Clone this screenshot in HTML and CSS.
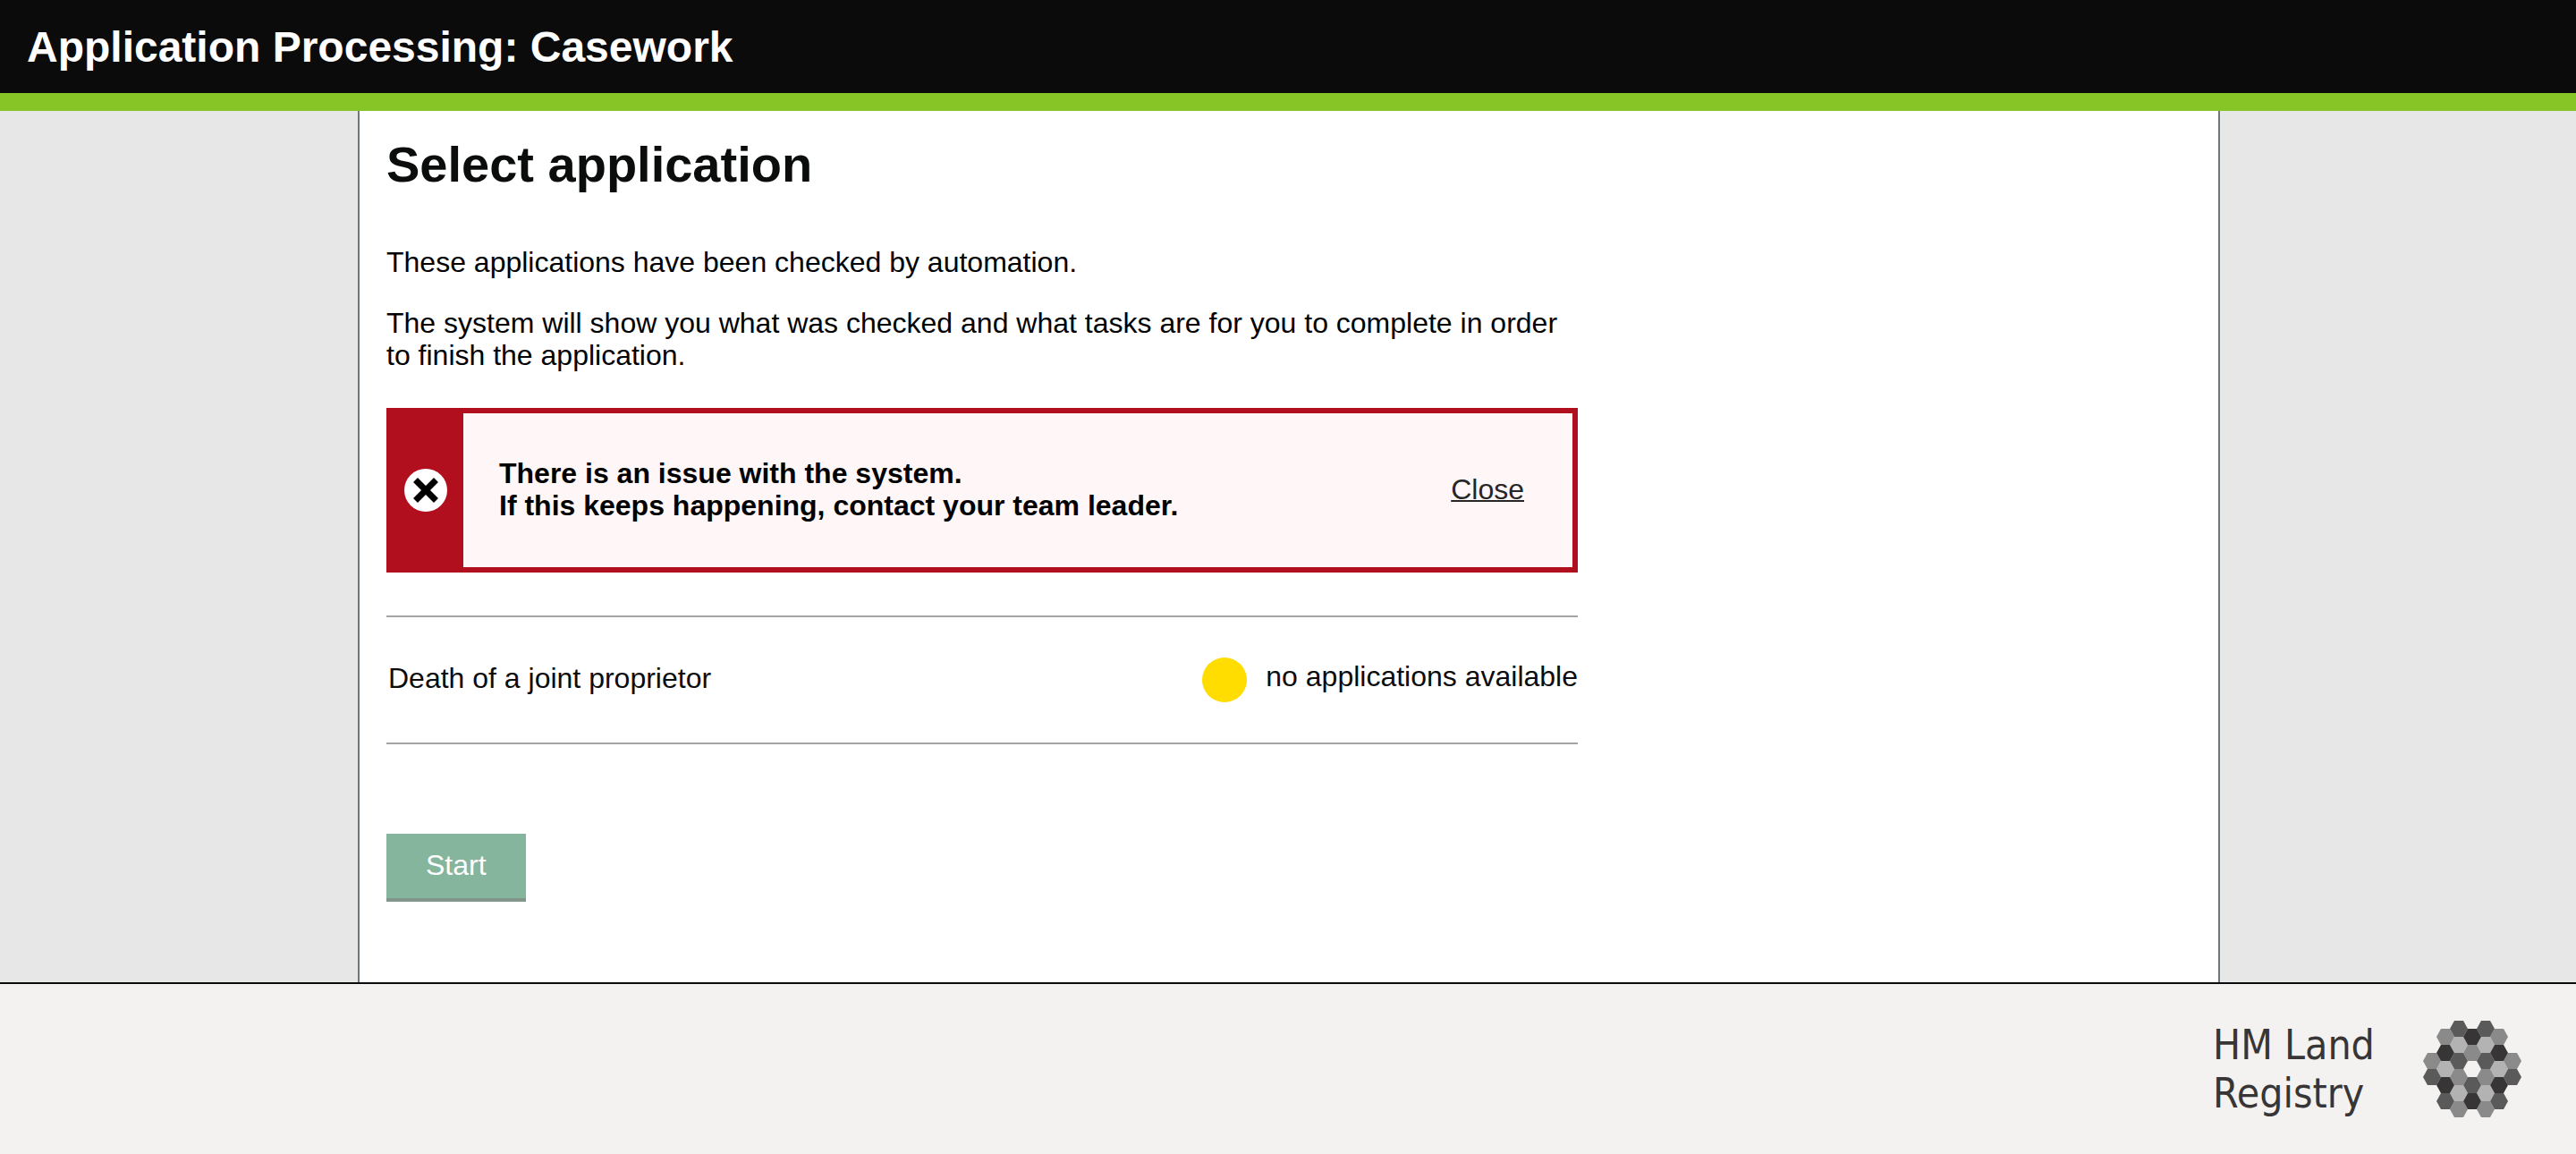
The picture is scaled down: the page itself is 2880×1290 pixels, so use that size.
FILE: index.html
```html
<!DOCTYPE html>
<html lang="en">
<head>
<meta charset="utf-8">
<title>Select application</title>
<link rel="stylesheet" href="styles.css">
</head>
<body>
<header class="header">Application Processing: Casework</header>
<div class="page">
  <main class="panel">
    <div class="column">
      <h1 class="title">Select application</h1>
      <p class="text">These applications have been checked by automation.</p>
      <p class="text">The system will show you what was checked and what tasks are for you to complete in order to finish the application.</p>
      <div class="alert" role="alert">
        <div class="alert-mark">
          <svg class="alert-icon" viewBox="0 0 48 48" aria-hidden="true">
            <circle cx="24" cy="24" r="24" fill="#fff"/>
            <path d="M12.500 12.500 35.500 35.500M35.500 12.500 12.500 35.500" stroke="#000" stroke-width="7"/>
          </svg>
        </div>
        <p class="alert-text">There is an issue with the system.<br>If this keeps happening, contact your team leader.</p>
        <a class="alert-close" href="#">Close</a>
      </div>
      <ul class="queue">
        <li class="queue-row">
          <span class="queue-name">Death of a joint proprietor</span>
          <span class="queue-dot"></span>
          <span class="queue-status">no applications available</span>
        </li>
      </ul>
      <button class="start" type="button" disabled>Start</button>
    </div>
  </main>
</div>
<footer class="footer">
  <div class="brand">HM Land<br>Registry</div>
  <svg class="emblem" viewBox="55 61 330 327" aria-hidden="true">
    <defs><path id="hex" d="M-30 0-15-27H15L30 0 15 27H-15Z"/></defs>
    <g fill="#b3b3b3">
      <use href="#hex" x="130" y="223"/><use href="#hex" x="310" y="223"/>
      <use href="#hex" x="175" y="142"/><use href="#hex" x="265" y="142"/>
      <use href="#hex" x="175" y="304"/><use href="#hex" x="265" y="304"/>
    </g>
    <g fill="#8a8a8a">
      <use href="#hex" x="85" y="196"/><use href="#hex" x="355" y="196"/>
      <use href="#hex" x="130" y="115"/><use href="#hex" x="310" y="115"/>
      <use href="#hex" x="175" y="250"/><use href="#hex" x="265" y="250"/>
      <use href="#hex" x="175" y="358"/><use href="#hex" x="265" y="358"/>
      <use href="#hex" x="220" y="169"/>
    </g>
    <g fill="#5a5a5a">
      <use href="#hex" x="85" y="250"/><use href="#hex" x="355" y="250"/>
      <use href="#hex" x="130" y="331"/><use href="#hex" x="310" y="331"/>
      <use href="#hex" x="175" y="88"/><use href="#hex" x="265" y="88"/>
      <use href="#hex" x="175" y="196"/><use href="#hex" x="265" y="196"/>
      <use href="#hex" x="220" y="277"/>
    </g>
    <g fill="#383536">
      <use href="#hex" x="130" y="169"/><use href="#hex" x="310" y="169"/>
      <use href="#hex" x="130" y="277"/><use href="#hex" x="310" y="277"/>
      <use href="#hex" x="220" y="115"/><use href="#hex" x="220" y="331"/>
    </g>
  </svg>
</footer>
</body>
</html>
```
FILE: styles.css
```css
* {
  box-sizing: border-box;
}

body {
  margin: 0;
  min-height: 100vh;
  display: flex;
  flex-direction: column;
  background: #f3f2f1;
  color: #0b0c0c;
  font-family: "Liberation Sans", Arial, sans-serif;
  font-size: 32px;
  line-height: 36px;
}

.header {
  padding: 25px 30px 23px;
  background: #0b0b0b;
  border-bottom: 20px solid #87c526;
  color: #fff;
  font-size: 48px;
  font-weight: bold;
  line-height: 56px;
}

.page {
  padding-left: 2px;
  background: #e7e7e7;
}

.panel {
  max-width: 2082px;
  margin: 0 auto;
  padding: 28px 30px 90px;
  background: #fff;
  border: solid #6f777b;
  border-width: 0 2px;
}

.column {
  max-width: 1332px;
}

.title {
  margin: 0 0 59px;
  font-size: 56px;
  line-height: 64px;
}

.text {
  margin: 0 0 32px;
  color: #000;
}

.alert {
  display: flex;
  align-items: center;
  min-height: 184px;
  margin-top: 41px;
  padding-right: 54px;
  border: 6px solid #b10e1e;
  background: #fef6f7;
}

.alert-mark {
  align-self: stretch;
  display: flex;
  align-items: center;
  width: 80px;
  padding-left: 14px;
  background: #b10e1e;
}

.alert-icon {
  width: 48px;
  height: 48px;
}

.alert-text {
  flex: 1;
  margin: 0;
  padding: 0 0 2px 40px;
  color: #000;
  font-weight: bold;
}

.alert-close {
  padding-bottom: 2px;
  color: #262626;
  text-decoration-thickness: 2px;
}

.queue {
  margin: 48px 0 100px;
  padding: 0;
  list-style: none;
  border-top: 2px solid #a5a5a5;
}

.queue-row {
  display: flex;
  align-items: center;
  padding: 45px 0;
  border-bottom: 2px solid #a5a5a5;
}

.queue-name {
  flex: 1;
  padding: 0 0 4px 2px;
}

.queue-dot {
  width: 50px;
  height: 50px;
  margin-right: 21px;
  border-radius: 50%;
  background: #ffdd00;
}

.queue-status {
  padding-bottom: 8px;
}

.start {
  display: block;
  padding: 15px 44px 21px;
  border: 0;
  background: #86b59e;
  box-shadow: inset 0 -4px #82958b;
  color: #fff;
  font: inherit;
  line-height: 40px;
}

.footer {
  flex: 1;
  display: flex;
  align-items: center;
  justify-content: flex-end;
  gap: 44px;
  min-height: 192px;
  padding: 0 61px 0 30px;
  border-top: 2px solid #0b0c0c;
}

.brand {
  min-width: 191px;
  color: #383536;
  font-family: "DejaVu Sans Condensed", "DejaVu Sans", sans-serif;
  font-size: 46px;
  line-height: 54px;
  white-space: nowrap;
}

.emblem {
  width: 110px;
  height: 109px;
}
```
